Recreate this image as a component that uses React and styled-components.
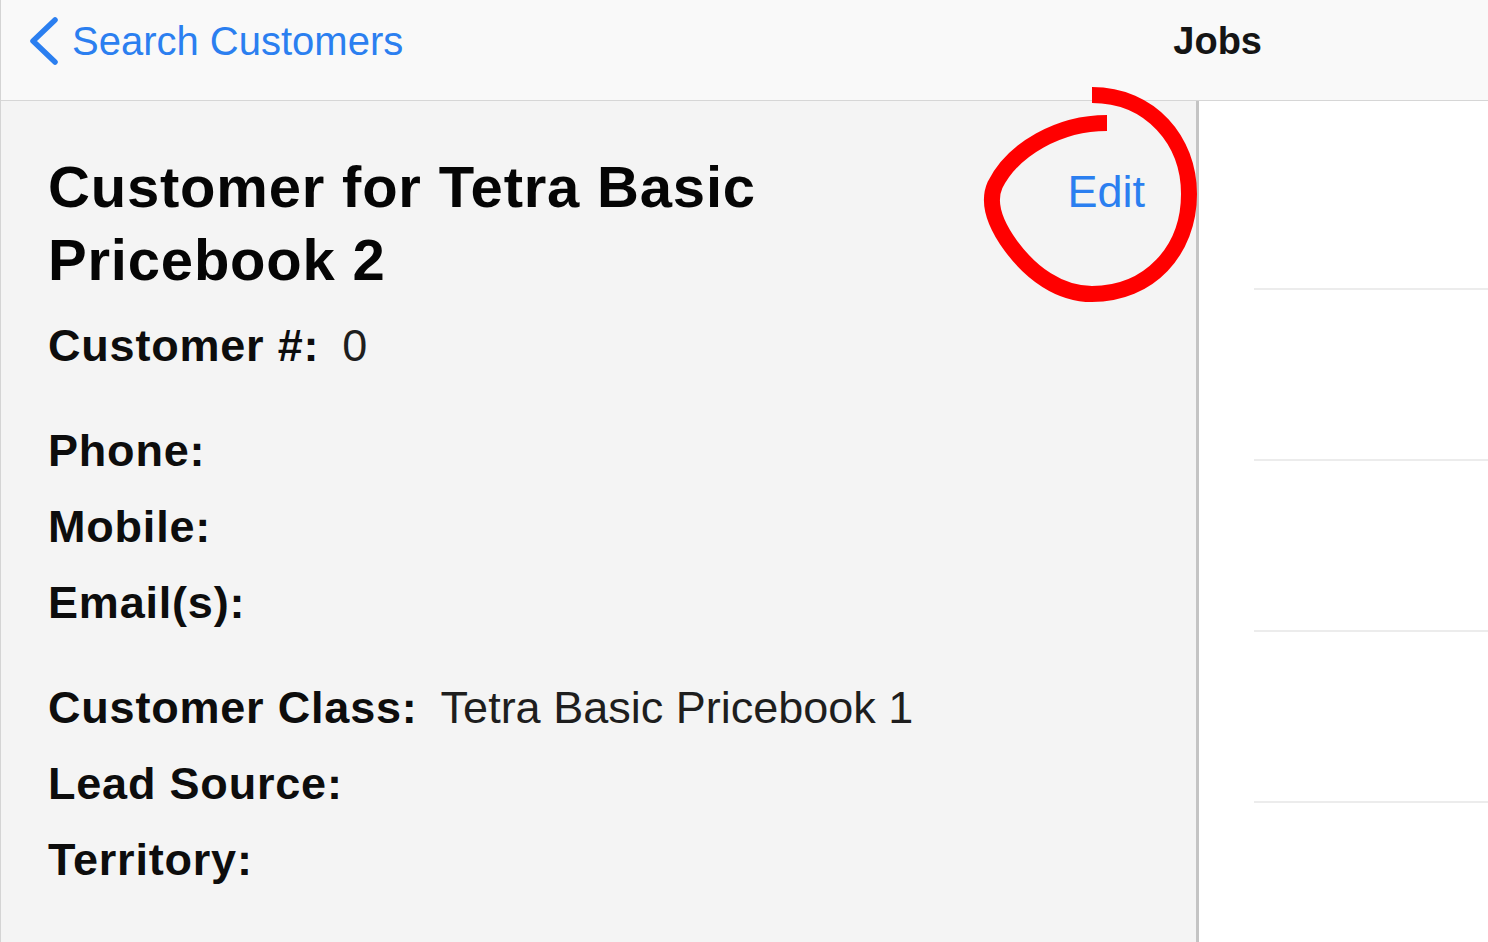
import styled, { createGlobalStyle } from "styled-components";

const GlobalStyle = createGlobalStyle`
  html, body {
    margin: 0;
    padding: 0;
    background: #f9f9f9;
  }
  body {
    font-family: "Liberation Sans", Arial, sans-serif;
    -webkit-font-smoothing: antialiased;
  }
`;

const BLUE = "#2b7ff0";

const Screen = styled.div`
  height: 100vh;
  display: flex;
  flex-direction: column;
  border-left: 1px solid #d4d4d4;
  box-sizing: border-box;
  overflow: hidden;
`;

const NavBar = styled.header`
  height: 101px;
  flex-shrink: 0;
  box-sizing: border-box;
  display: flex;
  align-items: flex-start;
  padding: 17px 226px 0 27px;
  background: #f9f9f9;
  border-bottom: 1px solid #d6d6d6;
`;

const BackButton = styled.button`
  display: flex;
  align-items: center;
  gap: 12px;
  height: 48px;
  padding: 0;
  border: none;
  background: none;
  cursor: pointer;
  font-family: inherit;
  font-size: 40px;
  color: ${BLUE};
`;

const NavTitle = styled.h2`
  margin: 0 0 0 auto;
  font-size: 38px;
  line-height: 48px;
  font-weight: 700;
  color: #151515;
`;

const Body = styled.div`
  flex: 1;
  display: flex;
  min-height: 0;
`;

const DetailPanel = styled.section`
  width: 1198px;
  flex-shrink: 0;
  box-sizing: border-box;
  background: #f4f4f4;
  border-right: 3px solid #c4c4c4;
  padding: 49px 51px 0 47px;
`;

const TitleRow = styled.div`
  display: flex;
  justify-content: space-between;
  align-items: baseline;
`;

const Title = styled.h1`
  margin: 0;
  max-width: 820px;
  font-size: 58px;
  line-height: 73px;
  font-weight: 700;
  letter-spacing: 0.8px;
  color: #050505;
`;

const EditWrap = styled.div`
  position: relative;
`;

const EditButton = styled.button`
  border: none;
  background: none;
  padding: 0;
  cursor: pointer;
  font-family: inherit;
  font-size: 45px;
  line-height: 73px;
  color: ${BLUE};
`;

const Annotation = styled.svg`
  position: absolute;
  right: -64px;
  top: -74px;
  width: 230px;
  height: 230px;
  pointer-events: none;
  overflow: visible;
`;

const FieldGroup = styled.div`
  display: flex;
  flex-direction: column;
  margin-top: ${(p) => p.$gap}px;
`;

const Field = styled.div`
  display: flex;
  align-items: baseline;
  height: 76px;
  line-height: 76px;
  font-size: 45px;
`;

const Label = styled.span`
  font-weight: 700;
  letter-spacing: 0.8px;
  color: #0d0d0d;
`;

const Value = styled.span`
  margin-left: 23px;
  color: #1e1e1e;
`;

const ListPanel = styled.section`
  flex: 1;
  background: #fff;
  padding-top: 18px;
`;

const ListRow = styled.div`
  height: 169px;
  margin-left: 55px;
  border-bottom: 2px solid #ececec;
`;

const groups = [
  { gap: 12, fields: [["Customer #:", "0"]] },
  {
    gap: 29,
    fields: [
      ["Phone:", ""],
      ["Mobile:", ""],
      ["Email(s):", ""],
    ],
  },
  {
    gap: 29,
    fields: [
      ["Customer Class:", "Tetra Basic Pricebook 1"],
      ["Lead Source:", ""],
      ["Territory:", ""],
    ],
  },
];

const App = () => {
  return (
    <Screen>
      <GlobalStyle />
      <NavBar>
        <BackButton>
          <svg width="32" height="50" viewBox="0 0 32 50">
            <polyline
              points="27,4 5,25 27,46"
              fill="none"
              stroke={BLUE}
              strokeWidth="5.5"
              strokeLinecap="round"
              strokeLinejoin="round"
            />
          </svg>
          Search Customers
        </BackButton>
        <NavTitle>Jobs</NavTitle>
      </NavBar>
      <Body>
        <DetailPanel>
          <TitleRow>
            <Title>Customer for Tetra Basic Pricebook 2</Title>
            <EditWrap>
              <EditButton>Edit</EditButton>
              <Annotation viewBox="0 0 230 230">
                <path
                  d="M113,14 C172,14 210,60 210,113 C210,170 170,213 113,213 C80,213 52,192 32,165 C16,143 8,122 16,104 C34,68 80,42 128,42"
                  fill="none"
                  stroke="#ff0000"
                  strokeWidth="16"
                />
              </Annotation>
            </EditWrap>
          </TitleRow>
          {groups.map((group, i) => (
            <FieldGroup key={i} $gap={group.gap}>
              {group.fields.map(([label, value]) => (
                <Field key={label}>
                  <Label>{label}</Label>
                  {value && <Value>{value}</Value>}
                </Field>
              ))}
            </FieldGroup>
          ))}
        </DetailPanel>
        <ListPanel>
          {[0, 1, 2, 3].map((n) => (
            <ListRow key={n} />
          ))}
        </ListPanel>
      </Body>
    </Screen>
  );
};

export default App;
